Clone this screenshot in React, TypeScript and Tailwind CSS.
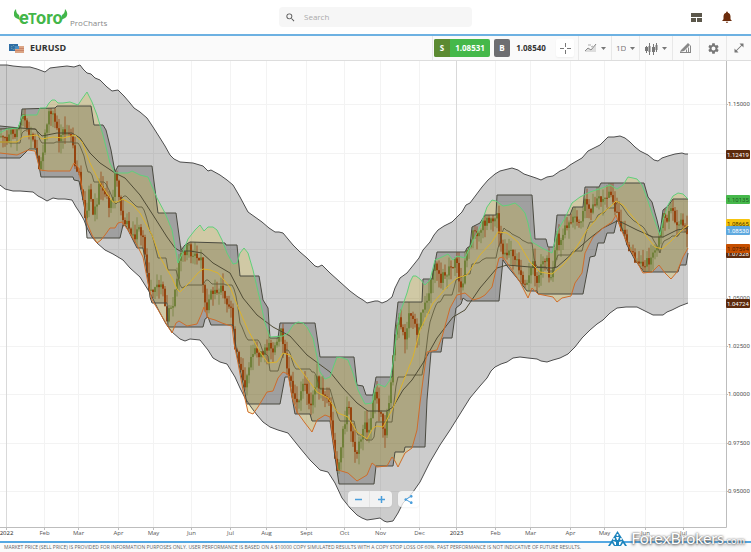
import { MdNotifications, MdOpenInFull, MdSearch, MdSettings, MdShare } from "react-icons/md";

type Point = [number, number];

const parse = (s: string): Point[] => s.trim().split(/\s+/).map((p) => p.split(",").map(Number) as Point);

const OUTER_UP = parse(`0,65 7,65 13,66 23,67 30,67 37,69 45,72 50,68 58,67 67,66 74,67 80,65 83,69 87,73 91,74 95,78 100,80 107,87
  112,91 118,90 124,96 130,103 134,108 140,112 147,118 153,127 160,138 165,146 170,155 174,159 180,162 193,163 203,166 208,171
  211,170 220,175 227,180 233,185 240,197 248,212 255,217 262,222 269,228 275,232 279,232 283,233 293,245 300,252 307,258 315,266
  318,267 322,265 330,273 340,282 350,291 358,297 363,300 367,303 375,301 378,301 382,303 387,301 392,297 395,288 400,278 407,273
  415,263 419,258 423,250 430,242 434,235 438,230 444,226 452,222 457,217 462,212 466,205 470,203 476,195 482,187 488,180 495,174
  500,171 512,168 518,170 524,174 530,176 536,178 541,180 547,177 553,176 560,171 565,169 570,165 575,162 582,158 588,151 594,148
  600,145 608,137 614,137 620,136 625,138 630,142 635,147 640,151 644,153 648,155 654,160 658,161 662,158 668,156 675,154 682,153 685,154 688,154`);

const OUTER_LOW = parse(`0,185 5,189 13,191 20,191 33,192 38,196 42,198 47,201 53,198 58,199 65,199 72,200 76,207 80,213 84,220 87,228
  92,237 97,243 105,250 113,254 123,260 130,268 140,277 145,285 150,293 160,313 166,324 172,332 180,339 185,341 190,339 200,340 204,345
  208,350 213,358 220,362 227,364 235,377 240,388 245,398 251,407 257,415 263,422 270,427 278,430 288,433 300,448 310,460 320,470
  328,472 335,483 342,498 350,508 357,515 362,518 367,520 374,519 380,518 384,521 387,522 393,521 398,513 403,503 408,498 413,492
  420,482 430,462 440,445 450,430 460,414 470,398 480,386 487,378 491,371 495,367 501,364 507,362 513,358 520,357 528,358 537,359
  541,361 547,362 553,360 560,358 568,354 575,347 582,338 590,330 597,324 603,320 610,313 617,308 626,307 637,307 645,311 653,315
  663,315 667,312 672,310 680,306 688,303`);

const CHANNEL_UP = parse(`0,126 20,128 22,109 55,108 57,106 91,106 94,125 103,125 106,130 111,150 115,172 118,166 152,166 158,213
  176,213 181,250 185,245 190,242 225,243 226,245 237,245 240,276 259,276 263,300 268,308 270,338 278,338 280,323 315,323 320,357
  354,357 357,385 363,386 366,395 373,395 376,377 392,377 395,330 398,302 422,302 423,279 432,279 437,252 465,252 467,248 470,246
  472,227 480,223 485,215 496,215 497,195 532,195 535,239 546,239 548,247 554,247 557,215 570,215 573,207 583,207 585,187 599,187
  601,183 644,183 648,197 652,202 655,213 657,220 660,233 663,210 668,206 673,199 688,199`);

const CHANNEL_LOW = parse(`0,158 20,158 24,154 29,149 36,149 41,177 73,177 74,180 79,181 82,195 85,210 87,238 120,238 123,225 126,226
  137,248 143,248 147,272 150,297 152,303 167,303 168,327 203,327 205,319 208,317 211,325 233,325 237,355 245,393 247,404 280,404
  285,377 289,377 292,397 295,414 310,414 312,421 330,421 335,457 339,484 374,484 376,466 393,466 395,452 404,452 405,447 425,447
  427,400 431,352 441,352 443,338 452,338 456,308 461,304 463,298 467,301 499,301 503,260 507,266 517,278 527,291 537,291 538,294
  583,294 590,257 595,256 598,243 604,243 607,233 614,233 617,220 622,228 627,245 635,260 644,272 678,272 680,265 686,265 688,253`);

const BAND_UP = parse(`0,133 7,129 18,128 22,116 25,115 37,115 40,108 46,108 49,103 52,100 55,100 58,103 63,103 70,102 78,105 82,99 87,92
  92,102 97,115 103,135 110,163 115,173 123,173 128,173 132,171 140,175 148,177 157,198 165,213 172,230 178,263 183,252 188,239
  195,230 200,225 204,231 208,227 213,227 217,230 222,240 227,253 233,264 237,263 240,253 244,248 248,253 253,270 260,300 265,323
  270,337 283,336 288,333 293,325 298,322 303,323 307,327 313,338 317,357 320,372 325,379 330,377 334,365 337,357 343,358 348,360
  353,373 358,390 365,404 372,403 375,388 378,384 385,387 390,380 393,363 397,330 400,313 407,293 410,282 413,276 416,276 420,279
  425,285 430,280 435,260 442,257 448,254 453,260 457,256 465,258 472,243 480,227 487,207 492,200 496,201 503,206 509,205 515,203
  520,207 525,213 528,223 532,242 542,248 552,253 558,230 565,218 572,203 580,197 590,192 602,188 610,185 617,189 623,185 628,177
  633,178 637,179 642,185 647,198 652,213 657,227 660,235 663,220 668,205 673,196 678,193 683,194 688,199`);

const BAND_LOW = parse(`0,153 17,155 28,150 35,151 40,170 48,171 55,171 70,171 74,163 78,167 82,187 87,223 92,235 97,243 101,240 105,235
  110,228 115,228 118,223 122,222 128,230 137,245 143,257 148,283 152,300 160,313 167,325 172,333 176,323 179,321 187,326 197,324
  201,315 204,307 208,318 215,320 222,323 228,325 232,326 234,343 238,363 243,390 248,412 253,414 258,407 267,392 273,391 278,378
  283,372 288,374 292,397 297,412 305,423 312,432 317,420 325,415 330,417 333,440 336,457 338,470 348,473 357,481 362,478 367,475
  372,463 377,467 387,466 392,457 395,461 398,467 402,459 405,453 412,448 417,430 420,403 423,380 427,352 437,350 442,337 450,308
  457,295 465,293 473,300 480,298 485,295 492,287 496,270 499,258 503,257 512,270 520,282 528,298 532,288 538,294 553,297 557,302
  562,298 571,296 575,283 582,273 585,253 593,237 603,228 612,222 616,215 620,227 628,245 637,262 643,273 652,272 659,265 665,273
  671,279 677,272 683,257 688,248`);

const BASIS = parse(`0,142 17,142 23,137 37,135 42,139 53,137 63,138 75,135 82,142 90,163 100,183 108,195 113,202 117,202 123,199 133,205
  140,213 152,235 160,257 172,278 177,289 180,292 190,282 198,273 203,269 210,270 218,273 230,287 238,307 248,330 260,352 268,363
  277,362 283,353 290,355 303,373 317,392 328,398 338,413 348,417 357,432 367,439 373,428 377,426 383,427 393,408 405,377 413,357
  420,330 433,303 447,287 457,278 467,275 480,255 492,242 498,232 507,233 518,242 530,262 540,272 552,274 563,265 573,253 587,230
  600,215 610,207 616,201 623,205 637,222 647,237 655,247 662,249 670,242 682,230 688,225`);

const AVERAGE = parse(`0,129 20,128 35,129 42,136 57,133 72,133 80,138 90,153 100,163 115,173 125,178 140,195 153,215 167,237 175,248
  180,251 190,251 202,253 213,263 230,273 243,298 257,315 273,327 290,336 307,355 330,372 343,388 357,403 368,411 387,411 393,407
  403,390 412,380 423,363 437,338 453,317 465,310 480,288 497,268 507,265 530,267 552,268 557,267 573,253 590,238 603,228 617,221
  623,223 637,230 653,237 663,237 677,230 688,228`);

const PRICE = parse(`0,141 4,133 8,138 12,128 15,142 18,130 20,130 22,112 27,125 33,138 37,150 40,170 44,152 47,122 50,110 54,118 58,130 60,141
  64,130 70,138 73,145 75,163 80,178 84,200 86,225 88,203 90,185 93,213 97,205 100,183 105,195 110,205 113,200 115,172 118,182
  121,205 124,222 130,225 135,240 140,228 144,243 147,265 150,292 155,288 158,280 163,288 167,318 172,308 176,290 180,257 185,252
  190,246 192,262 196,255 200,258 202,262 204,292 207,310 212,290 218,292 222,288 228,305 232,310 235,345 240,367 245,390 250,365
  255,350 260,356 265,350 270,343 275,352 281,330 285,355 290,375 295,400 300,395 305,385 310,407 315,395 318,377 322,395 328,395
  332,425 335,453 338,470 342,440 347,415 349,400 352,435 357,455 362,435 365,425 370,430 375,387 380,410 385,435 390,395 395,342
  400,315 405,340 410,315 415,320 418,335 421,315 425,305 430,290 435,258 440,280 445,276 450,270 457,260 460,288 463,285 466,257
  470,242 473,230 478,242 483,226 488,218 493,225 497,207 500,240 505,255 510,248 515,260 520,268 524,285 530,278 533,262 538,285
  543,262 547,257 550,278 554,265 557,237 560,243 565,226 570,224 575,213 580,226 585,198 590,214 595,207 600,195 605,203 610,190
  615,205 620,225 625,235 630,250 635,258 640,265 645,262 650,260 655,250 660,240 663,217 668,217 672,206 676,225 680,220 684,222 688,231`);

const LAST_X = 688;

const MONTHS: [number, string][] = [
  [6, "2022"], [44, "Feb"], [78, "Mar"], [118, "Apr"], [153, "May"], [191, "Jun"], [230, "Jul"], [266, "Aug"],
  [306, "Sept"], [344, "Oct"], [380, "Nov"], [419, "Dec"], [456, "2023"], [495, "Feb"], [530, "Mar"], [570, "Apr"],
  [604, "May"], [645, "Jun"], [683, "Jul"],
];

const PRICE_ROWS: [number, string][] = [
  [104, "1.15000"], [153, ""], [201, ""], [249, ""], [298, "1.05000"], [346, "1.02500"], [394, "1.00000"], [443, "0.97500"], [491, "0.95000"],
];

const TAGS = [
  { y: 154, label: "1.12419", fill: "#5e2a0c", color: "#fff" },
  { y: 199, label: "1.10135", fill: "#46b84b", color: "#1d5c22" },
  { y: 223, label: "1.08665", fill: "#f5c40f", color: "#4a3500" },
  { y: 230, label: "1.08530", fill: "#5fa9df", color: "#fff" },
  { y: 253, label: "1.07328", fill: "#5e2a0c", color: "#fff" },
  { y: 248, label: "1.07594", fill: "#c64f00", color: "#4a1a00" },
  { y: 303, label: "1.04724", fill: "#5e2a0c", color: "#fff" },
];

function valueAt(points: Point[], x: number) {
  for (let i = 1; i < points.length; i++) {
    const [x0, y0] = points[i - 1];
    const [x1, y1] = points[i];
    if (x <= x1) return y0 + ((y1 - y0) * (x - x0)) / (x1 - x0);
  }
  return points[points.length - 1][1];
}

const line = (points: Point[]) => "M" + points.map((p) => p.join(",")).join("L");
const area = (up: Point[], low: Point[]) => line([...up, ...[...low].reverse()]) + "Z";

const MIDDLE: Point[] = [];
for (let x = 0; x <= LAST_X; x += 2) {
  MIDDLE.push([x, Math.round((valueAt(CHANNEL_UP, x) + valueAt(CHANNEL_LOW, x)) / 2)]);
}

// pseudo random but stable, so candles keep their shape between renders
const noise = (n: number) => {
  const v = Math.sin(n * 127.1) * 43758.5453;
  return v - Math.floor(v);
};

const CANDLES = Array.from({ length: 344 }, (_, i) => {
  const x = i * 2 + 0.5;
  const open = valueAt(PRICE, x - 1) + (noise(i) - 0.5) * 10;
  const close = valueAt(PRICE, x + 1) + (noise(i + 1) - 0.5) * 10;
  const top = Math.max(valueAt(CHANNEL_UP, x), Math.min(open, close) - noise(i + 500) * 14);
  const bottom = Math.min(valueAt(CHANNEL_LOW, x), Math.max(open, close) + noise(i + 900) * 14);
  return { x, open, close, top, bottom, down: close > open };
});

function Chart() {
  return (
    <svg viewBox="0 61 751 480" className="block w-full" role="img" aria-label="EURUSD daily chart">
      {/* Grid */}
      {PRICE_ROWS.map(([y]) => (
        <path key={y} d={`M0 ${y + 0.5}H726`} stroke="#f3f3f3" />
      ))}
      {MONTHS.map(([x, label]) => (
        <path key={x} d={`M${x + 0.5} 61V527`} stroke={label.startsWith("2") ? "#d9d9d9" : "#f3f3f3"} />
      ))}

      {/* Channels */}
      <path d={area(OUTER_UP, OUTER_LOW)} fill="#000" fillOpacity="0.2" />
      <path d={area(CHANNEL_UP, CHANNEL_LOW)} fill="#000" fillOpacity="0.21" />
      <path d={area(BAND_UP, BAND_LOW)} fill="#e7c100" fillOpacity="0.19" />

      {/* Candles */}
      {CANDLES.map((c) => (
        <g key={c.x} fill={c.down ? "#96440f" : "#71813a"}>
          <rect x={c.x} y={c.top} width="1" height={Math.max(1, c.bottom - c.top)} fillOpacity="0.75" />
          <rect x={c.x - 0.5} y={Math.min(c.open, c.close)} width="2" height={Math.max(1, Math.abs(c.close - c.open))} />
        </g>
      ))}

      <g fill="none" strokeLinejoin="round">
        <path d={line(OUTER_UP)} stroke="#4d4d4d" />
        <path d={line(OUTER_LOW)} stroke="#4d4d4d" />
        <path d={line(CHANNEL_UP)} stroke="#4a4a40" />
        <path d={line(CHANNEL_LOW)} stroke="#4a4a40" />
        <path d={line(MIDDLE)} stroke="#5f5a3c" strokeOpacity="0.85" />
        <path d={line(AVERAGE)} stroke="#4f4b35" />
        <path d={line(BAND_UP)} stroke="#5fd07c" />
        <path d={line(BAND_LOW)} stroke="#cf6d2a" />
        <path d={line(BASIS)} stroke="#dcb32c" />
      </g>

      {/* Axes */}
      <path d="M0 527.5H726.5V61" fill="none" stroke="#bdbdbd" />
      <g fontFamily="'Open Sans', sans-serif" fontSize="6" fill="#555">
        {MONTHS.map(([x, label]) => (
          <g key={x}>
            <path d={`M${x + 0.5} 527V530`} stroke="#bdbdbd" />
            <text x={x + 0.5} y="535" textAnchor="middle" fill={label.startsWith("2") ? "#222" : "#555"}>
              {label}
            </text>
          </g>
        ))}
        <g fontFamily="Roboto, sans-serif">
          {PRICE_ROWS.filter(([, label]) => label).map(([y, label]) => (
            <g key={y}>
              <path d={`M726 ${y + 0.5}H728`} stroke="#bdbdbd" />
              <text x="728" y={y + 2}>
                {label}
              </text>
            </g>
          ))}
          {TAGS.map((tag) => (
            <g key={tag.label}>
              <rect x="726" y={tag.y - 4} width="24" height="9" rx="1" fill={tag.fill} />
              <text x="727" y={tag.y + 3} fill={tag.color}>
                {tag.label}
              </text>
            </g>
          ))}
        </g>
      </g>
    </svg>
  );
}

function Logo() {
  return (
    <svg width="54" height="24" viewBox="0 0 54 24" role="img" aria-label="eToro" className="block">
      <g fill="#43b649">
        <path d="M2 4C-1 7 -1 11 2 13l4 2-1-5C3 9 2 7 2 4z" />
        <path d="M51 4c3 3 3 7 0 9l-4 2 1-5c2-1 3-3 3-6z" />
        <g fontFamily="Roboto, sans-serif" fontWeight="700">
          <text x="5" y="19" fontSize="18">e</text>
          <text x="14" y="19" fontSize="14">T</text>
          <text x="22" y="19" fontSize="18">oro</text>
        </g>
      </g>
    </svg>
  );
}

function Flags() {
  return (
    <svg width="15" height="9" viewBox="0 0 15 9" aria-hidden="true">
      <rect width="9" height="7" fill="#2f6ea5" />
      <circle cx="4.500" cy="3.500" r="2" fill="none" stroke="#8fb6b0" strokeDasharray="1 1" />
      <rect x="6" y="2" width="9" height="7" fill="#dba585" />
      <path d="M6 4.500h9M6 6.500h9" stroke="#c98467" />
      <rect x="6" y="2" width="4" height="3" fill="#4b8fc4" />
    </svg>
  );
}

const Caret = () => (
  <svg width="5" height="3" viewBox="0 0 5 3" aria-hidden="true" className="shrink-0">
    <path d="M0 0h5L2.500 3z" fill="#777" />
  </svg>
);

const toolClass = "flex h-full items-center justify-center gap-1 border-l border-[#e8e8e8] text-[#777]";

export default function App() {
  return (
    <div className="relative flex min-h-screen flex-col bg-white font-['Open_Sans',sans-serif] text-[#333]">
      <header className="grid h-9 shrink-0 grid-cols-[1fr_193px_1fr] items-center border-b-2 border-[#6db1e2]">
        <a href="#" className="flex items-center gap-0.5 pl-3.5">
          <Logo />
          <span className="pt-3 text-[8px] leading-[10px] text-[#888]">ProCharts</span>
        </a>
        <label className="flex h-5 items-center gap-2 rounded-sm bg-[#f6f6f6] px-1.5">
          <MdSearch size={11} color="#555" aria-hidden="true" className="shrink-0" />
          <input
            type="text"
            aria-label="Search"
            placeholder="Search"
            className="w-full bg-transparent text-[8px] leading-3 outline-none placeholder:text-[#aaa]"
          />
        </label>
        <div className="flex items-center justify-end gap-[18px] pr-[17px]">
          <button type="button" aria-label="Layouts">
            <svg width="11" height="9" viewBox="0 0 11 9" fill="#5b574b" className="block">
              <path d="M0 0h11v4H0zM0 5h5v4H0zM6 5h5v4H6z" />
            </svg>
          </button>
          <button type="button" aria-label="Notifications">
            <MdNotifications size={14} color="#6b2c0c" />
          </button>
        </div>
      </header>

      {/* Instrument toolbar */}
      <div className="flex h-[25px] shrink-0 items-center border-b border-[#ddd] bg-[#fafafa]">
        <div className="flex flex-1 items-center gap-1.5 pl-[9px]">
          <Flags />
          <h1 className="text-[9px] leading-3 font-bold">EURUSD</h1>
        </div>
        <div className="flex h-full items-center gap-1 border-l border-[#e8e8e8] pl-px">
          <button type="button" className="flex h-[18px] items-center rounded-xs bg-[#45b84a] text-[8px] font-bold text-white">
            <span className="flex h-full w-4 items-center justify-center rounded-l-xs bg-[#5c8a32]">S</span>
            <span className="w-10 text-center">1.08531</span>
          </button>
          <button type="button" className="flex h-[18px] items-center text-[8px] font-bold">
            <span className="flex h-full w-4 items-center justify-center rounded-xs bg-[#6d6e71] text-white">B</span>
            <span className="w-[42px] text-center">1.08540</span>
          </button>
        </div>
        <button type="button" aria-label="Crosshair" className="flex h-full w-[26px] items-center justify-center">
          <span className="flex size-[18px] items-center justify-center rounded-xs bg-white shadow-xs">
            <svg width="11" height="11" viewBox="0 0 11 11" stroke="#777" className="block">
              <path d="M5.500 0v4M5.500 7v4M0 5.500h4M7 5.500h4" />
            </svg>
          </span>
        </button>
        <button type="button" aria-label="Compare" className={`${toolClass} w-[33px]`}>
          <svg width="12" height="10" viewBox="0 0 12 10" fill="none">
            <path d="M0 8l3-3 3 2 5-6v8H0z" fill="#ddd" />
            <path d="M0 8l3-3 3 2 5-6" stroke="#888" />
            <path d="M3 2h3M6 4l2-1" stroke="#aaa" />
          </svg>
          <Caret />
        </button>
        <label className={`${toolClass} w-7`}>
          <select aria-label="Period" className="w-2.5 appearance-none bg-transparent text-[8px] outline-none">
            <option>1D</option>
            <option>1W</option>
          </select>
          <Caret />
        </label>
        <button type="button" aria-label="Chart type" className={`${toolClass} w-[33px]`}>
          <svg width="13" height="13" viewBox="0 0 13 13" fill="#777">
            <path d="M1 4h1v7H1zM4 1h1v12H4zM8 2h1v11H8zM11 1h1v9h-1z" />
            <path d="M0 5h3v4H0zM3.500 4h2v6h-2zM7 5h3v5H7zM10.500 3h2v5h-2z" />
          </svg>
          <Caret />
        </button>
        <button type="button" aria-label="Draw" className={`${toolClass} w-[27px]`}>
          <svg width="12" height="10" viewBox="0 0 12 10" fill="#888">
            <path d="M1 7L8 0l2 2-6 6-4 1zM10 3l1-1v8h-1zM8 5l1-1v6H8zM6 7l1-1v4H6zM0 9h11v1H0z" />
          </svg>
        </button>
        <button type="button" aria-label="Settings" className={`${toolClass} w-[27px]`}>
          <MdSettings size={13} />
        </button>
        <button type="button" aria-label="Full screen" className={`${toolClass} w-[25px]`}>
          <MdOpenInFull size={12} />
        </button>
      </div>

      <main className="relative">
        <Chart />
        <div className="absolute bottom-[34px] left-[348px] flex gap-1.5 text-[#4a9edb]">
          <div className="flex h-4 rounded-sm bg-white/75 shadow-xs">
            <button type="button" aria-label="Zoom out" className="flex w-[22px] items-center justify-center border-r border-[#e4e4e4]">
              <svg width="7" height="7" viewBox="0 0 7 7" stroke="currentColor" strokeWidth="1.500">
                <path d="M0 3.500h7" />
              </svg>
            </button>
            <button type="button" aria-label="Zoom in" className="flex w-[22px] items-center justify-center">
              <svg width="7" height="7" viewBox="0 0 7 7" stroke="currentColor" strokeWidth="1.500">
                <path d="M3.500 0v7M0 3.500h7" />
              </svg>
            </button>
          </div>
          <button type="button" aria-label="Share" className="flex h-4 w-[21px] items-center justify-center rounded-sm bg-white/75 shadow-xs">
            <MdShare size={11} />
          </button>
        </div>
      </main>

      <footer className="flex-1 border-t-2 border-[#55a8e2] bg-[#fafafa] pl-1 text-[5px] leading-[9px] whitespace-nowrap text-[#666]">
        MARKET PRICE (SELL PRICE) IS PROVIDED FOR INFORMATION PURPOSES ONLY. USER PERFORMANCE IS BASED ON A $10000 COPY
        SIMULATED RESULTS WITH A COPY STOP LOSS OF 60%. PAST PERFORMANCE IS NOT INDICATIVE OF FUTURE RESULTS.
      </footer>

      {/* Watermark */}
      <div className="absolute right-1.5 bottom-[3px] flex items-center gap-1 font-[Lato,sans-serif] text-white">
        <svg width="19" height="16" viewBox="0 0 19 16" aria-hidden="true">
          <path d="M9.500 0L19 15H0z" fill="#1c84bd" />
          <g fill="#fff">
            <circle cx="9.500" cy="4" r="1" />
            <path d="M8 6h3l-1 3H9z" />
            <circle cx="6" cy="8" r="1" />
            <circle cx="13" cy="8" r="1" />
            <path d="M5 10l3 1v3H7zM14 10l-3 1v3h1zM2 15l2-3 2 3zM13 15l2-3 2 3z" />
          </g>
        </svg>
        <span className="text-[16px] leading-[18px] [text-shadow:0_1px_3px_#444,0_0_2px_#666]">
          ForexBrokers<span className="text-[10px]">.com</span>
        </span>
      </div>
    </div>
  );
}
